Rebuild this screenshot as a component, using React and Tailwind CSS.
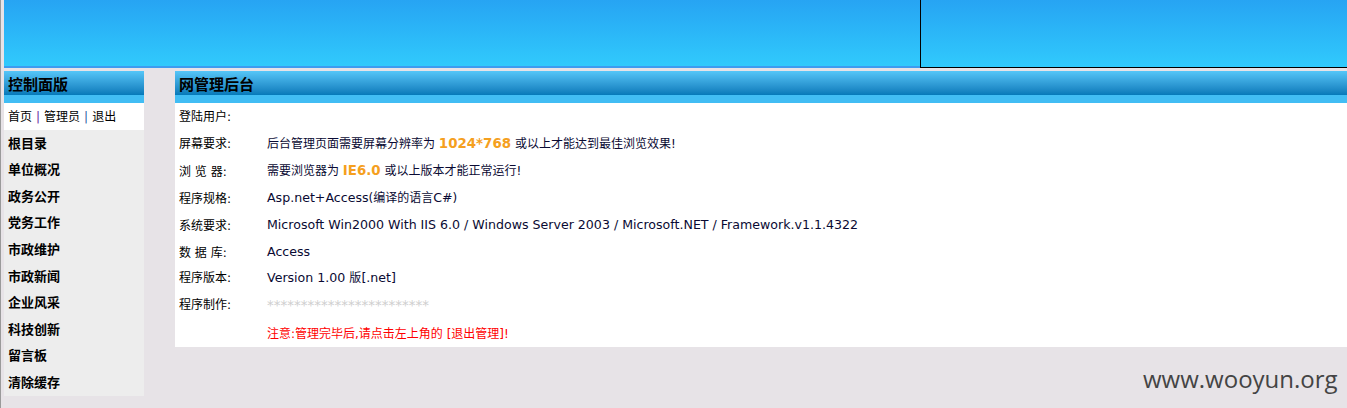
import React from 'react';

const cjk = { fontFamily: '"DejaVu Sans", Verdana, "Noto Sans CJK SC", sans-serif' };

const menu = ['根目录', '单位概况', '政务公开', '党务工作', '市政维护', '市政新闻', '企业风采', '科技创新', '留言板', '清除缓存'];

const TitleBar = ({ children }) => (
    <div className="flex flex-col">
        <div className="h-[24px] bg-gradient-to-b from-[#55c6f8] to-[#0479b9] flex items-end pl-[4px] text-[15px] font-bold text-black leading-[20px]">
            {children}
        </div>
        <div className="h-[8px] bg-[#41bdf4]" />
    </div>
);

const Row = ({ h, label, children }) => (
    <div className="flex items-center pt-[2px]" style={{ height: h }}>
        <div className="w-[92px] pl-[4px] text-black shrink-0">{label}</div>
        <div className="text-[#0a0a33]">{children}</div>
    </div>
);

// latin runs are a touch wider in the original (Verdana-ish)
const L = ({ children }) => <span className="text-[12.6px]">{children}</span>;
const Orange = ({ children }) => <span className="text-[#f5a01e] font-bold text-[13.4px]">{children}</span>;

const App = () => {
    return (
        <div className="relative h-[408px] overflow-hidden bg-[#e7e3e7] border-l border-[#9a9a9a] text-[12px]" style={cjk}>
            {/* header */}
            <div className="flex h-[68px] pl-[3px]">
                <div className="flex-1 flex flex-col">
                    <div className="flex-1 bg-gradient-to-b from-[#27a4f3] to-[#31cafc]" />
                    <div className="h-[2px] bg-[#3d9cf0]" />
                </div>
                <div className="w-[427px] bg-gradient-to-b from-[#27a4f3] to-[#31cafc] border-l border-b border-black" />
            </div>

            <div className="flex mt-[3px] pl-[3px]">
                {/* sidebar */}
                <div className="w-[140px] flex flex-col bg-[#ededed]">
                    <TitleBar>控制面版</TitleBar>
                    <div className="h-[27px] bg-white flex items-center pl-[4px] text-black">
                        首页<span className="text-[#6b1fa0] mx-[4px]">|</span>管理员<span className="text-[#1f5fa0] mx-[4px]">|</span>退出
                    </div>
                    {menu.map((m) => (
                        <div key={m} className="h-[26.6px] flex items-center pl-[4px] text-[13px] font-bold text-black">
                            {m}
                        </div>
                    ))}
                </div>

                {/* main */}
                <div className="flex-1 ml-[31px] self-start">
                    <TitleBar>网管理后台</TitleBar>
                    <div className="bg-white flex flex-col">
                        <Row h={26} label="登陆用户:" />
                        <Row h={28} label="屏幕要求:">
                            后台管理页面需要屏幕分辨率为 <Orange>1024*768</Orange> 或以上才能达到最佳浏览效果!
                        </Row>
                        <Row h={27} label="浏 览 器:">
                            需要浏览器为 <Orange>IE6.0</Orange> 或以上版本才能正常运行!
                        </Row>
                        <Row h={27} label="程序规格:"><L>Asp.net+Access</L>(编译的语言<L>C#</L>)</Row>
                        <Row h={27.5} label="系统要求:">
                            <L>Microsoft Win2000 With IIS 6.0 / Windows Server 2003 / Microsoft.NET / Framework.v1.1.4322</L>
                        </Row>
                        <Row h={26} label="数 据 库:"><L>Access</L></Row>
                        <Row h={25.5} label="程序版本:"><L>Version 1.00 </L>版<L>[.net]</L></Row>
                        <Row h={28} label="程序制作:">
                            <span className="text-[#cfcfcf] text-[13.5px]">************************</span>
                        </Row>
                        <Row h={29} label="">
                            <span className="text-[#ff0000]">注意:管理完毕后,请点击左上角的 [退出管理]!</span>
                        </Row>
                    </div>
                </div>
            </div>

            <div
                className="absolute left-[1142px] top-[363px] text-[24px] leading-[32px] text-[#444444]"
                style={{ fontFamily: '"Open Sans", sans-serif' }}
            >
                www.wooyun.org
            </div>
        </div>
    );
};

export default App;
